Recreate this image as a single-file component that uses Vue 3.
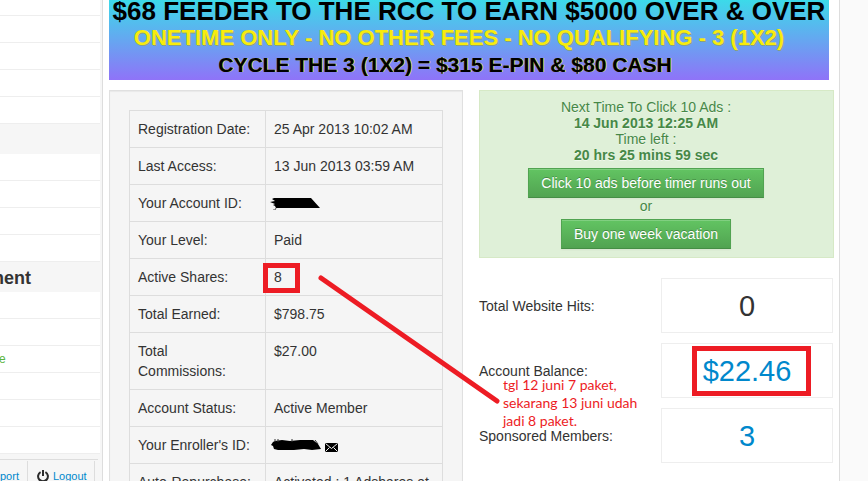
<script setup>
const menuTop = ['', '', '', '']
const menuMiddle = ['', '', '', '']
const menuBottom = ['', '', 'e', '', '', '']

const details = [
  { label: 'Registration Date:', value: '25 Apr 2013 10:02 AM' },
  { label: 'Last Access:', value: '13 Jun 2013 03:59 AM' },
  { label: 'Your Account ID:', kind: 'account' },
  { label: 'Your Level:', value: 'Paid' },
  { label: 'Active Shares:', value: '8' },
  { label: 'Total Earned:', value: '$798.75' },
  { label: 'Total Commissions:', value: '$27.00' },
  { label: 'Account Status:', value: 'Active Member' },
  { label: "Your Enroller's ID:", kind: 'enroller' },
  { label: 'Auto-Repurchase:', value: 'Activated : 1 Adshares at' }
]

const stats = [
  { label: 'Total Website Hits:', value: '0', link: false },
  { label: 'Account Balance:', value: '$22.46', link: true },
  { label: 'Sponsored Members:', value: '3', link: true }
]
</script>

<template>
  <div class="page">
    <aside class="sidebar">
      <ul class="menu">
        <li class="item item-cut"></li>
        <li v-for="(m, i) in menuTop" :key="i" class="item">{{ m }}</li>
      </ul>
      <div class="heading"></div>
      <ul class="menu">
        <li v-for="(m, i) in menuMiddle" :key="i" class="item">{{ m }}</li>
      </ul>
      <h2 class="heading">ment</h2>
      <ul class="menu">
        <li v-for="(m, i) in menuBottom" :key="i" class="item">
          <a v-if="m" class="green" href="#">{{ m }}</a>
        </li>
      </ul>
      <nav class="foot">
        <a class="foot-link support" href="#">port</a>
        <a class="foot-link logout" href="#">
          <svg class="power" width="12" height="12" viewBox="0 0 12 12" aria-hidden="true">
            <path d="M3.6 2.1A4.9 4.9 0 1 0 8.4 2.1" fill="none" stroke="#2b2b2b" stroke-width="2" />
            <path d="M6 0V6" stroke="#2b2b2b" stroke-width="2" />
          </svg>
          <span>Logout</span>
        </a>
      </nav>
    </aside>

    <main class="main">
      <div class="banner">
        <div class="b1">$68 FEEDER TO THE RCC TO EARN $5000 OVER &amp; OVER</div>
        <div class="b2">ONETIME ONLY - NO OTHER FEES - NO QUALIFYING - 3 (1X2)</div>
        <div class="b3">CYCLE THE 3 (1X2) = $315 E-PIN &amp; $80 CASH</div>
      </div>

      <div class="columns">
        <section class="well">
          <table class="details">
            <tbody>
              <tr v-for="d in details" :key="d.label">
                <th scope="row">{{ d.label }}</th>
                <td>
                  <svg v-if="d.kind === 'account'" class="scribble" width="52" height="14" viewBox="0 0 52 14" aria-hidden="true">
                    <path d="M4 2L41 2L50 12L6 12L5 10L3 9L5 8L0 6L5 5L2 3Z" fill="#000" />
                    <path d="M6 12L5 14L3 14" fill="none" stroke="#555" />
                  </svg>
                  <span v-else-if="d.kind === 'enroller'" class="enroller">
                    <svg class="scribble" width="52" height="14" viewBox="0 0 52 14" aria-hidden="true">
                      <path d="M5 3L12 2L20 3L30 2H43L48 6L51 11L42 12L34 11L24 12L8 12L4 11L3 8L1 7L3 4Z" fill="#000" />
                      <path d="M5 1V4M8 1V4M22 1V4M45 2L48 6" stroke="#333" stroke-width="1" />
                    </svg>
                    <svg class="mail" width="13" height="9" viewBox="0 0 13 9" aria-hidden="true">
                      <rect width="13" height="9" fill="#000" />
                      <path d="M0.5 0.5L6.5 5.5L12.5 0.5M0.5 8.5L4.5 4.5M12.5 8.5L8.5 4.5" fill="none" stroke="#f4f4f4" />
                    </svg>
                  </span>
                  <template v-else>{{ d.value }}</template>
                </td>
              </tr>
            </tbody>
          </table>
        </section>

        <section class="side">
          <div class="alert">
            <div>Next Time To Click 10 Ads :</div>
            <strong>14 Jun 2013 12:25 AM</strong>
            <div>Time left :</div>
            <strong>20 hrs 25 mins 59 sec</strong>
            <button class="btn" type="button">Click 10 ads before timer runs out</button>
            <div>or</div>
            <button class="btn" type="button">Buy one week vacation</button>
          </div>
          <dl class="stats">
            <div v-for="s in stats" :key="s.label" class="stat">
              <dt>{{ s.label }}</dt>
              <dd>
                <a v-if="s.link" href="#">{{ s.value }}</a>
                <span v-else>{{ s.value }}</span>
              </dd>
            </div>
          </dl>
        </section>
      </div>
    </main>
    <div class="gutter"></div>

    <div class="mark mark-shares"></div>
    <div class="mark mark-balance"></div>
    <svg class="pointer" width="182" height="130" viewBox="0 0 182 130" aria-hidden="true">
      <path d="M3 3L179 126" stroke="#ed1c24" stroke-width="5" stroke-linecap="round" />
    </svg>
    <p class="note">tgl 12 juni 7 paket,<br>sekarang 13 juni udah<br>jadi 8 paket.</p>
  </div>
</template>

<style>
body {
  margin: 0;
  background: #fafafa;
}
</style>

<style scoped>
.page {
  position: relative;
  display: flex;
  height: 100vh;
  overflow: hidden;
  font: 14px/20px "Liberation Sans", Arial, sans-serif;
  color: #333;
}
a {
  color: #0088cc;
  text-decoration: none;
}
.sidebar {
  flex: 0 0 102px;
  background: #f6f6f6;
  overflow: hidden;
}
.menu {
  list-style: none;
  margin: 0 2px 0 0;
  padding: 0;
  background: #fff;
}
.item {
  box-sizing: border-box;
  height: 27px;
  border-bottom: 1px solid #eee;
  font-size: 12px;
  line-height: 26px;
}
.item-cut {
  height: 16px;
}
.item .green {
  margin-left: -1px;
  color: #5bb542;
}
.heading {
  height: 30px;
  margin: 0 0 0 -12px;
  font-size: 18px;
  line-height: 32px;
}
.foot {
  display: flex;
  margin: 5px 4px 0 0;
  padding-top: 1px;
  border-top: 1px solid #ddd;
  font-size: 11px;
  line-height: 30px;
}
.foot-link {
  display: flex;
  align-items: center;
  box-sizing: border-box;
  border-right: 1px solid #ddd;
}
.support {
  width: 28px;
}
.logout {
  gap: 4px;
  width: 67px;
  padding-left: 9px;
}
.main {
  flex: 1;
  min-width: 0;
  padding: 0 5px 0 6px;
  background: #fff;
  border: solid #ddd;
  border-width: 0 1px;
}
.gutter {
  flex: 0 0 28px;
  background: #fafafa;
}
.banner {
  height: 80px;
  margin-right: 5px;
  overflow: hidden;
  background: linear-gradient(#3cdae9, #8f73f8);
  color: #000;
  font-weight: bold;
  text-align: center;
  white-space: nowrap;
}
.b1 {
  font-size: 26px;
  line-height: 22px;
}
.b2 {
  padding-right: 20px;
  color: #f8ec0c;
  font-size: 22px;
  line-height: 32px;
  text-shadow: 1px 1px 0 #8aa080;
}
.b3 {
  padding-right: 48px;
  font-size: 21px;
  line-height: 22px;
  text-shadow: 1px 0 0 #d6cc30;
}
.columns {
  display: grid;
  grid-template-columns: 354fr 355fr;
  gap: 16px;
  margin-top: 10px;
}
.well {
  padding: 19px;
  background: #f5f5f5;
  border: 1px solid #e0e0e0;
  box-shadow: inset 0 1px 1px rgba(0, 0, 0, 0.05);
}
.details {
  width: 100%;
  table-layout: fixed;
  border-collapse: collapse;
}
.details th,
.details td {
  padding: 8px;
  border: 1px solid #ddd;
  font-weight: normal;
  text-align: left;
  vertical-align: top;
}
.details th {
  width: 119px;
}
.scribble {
  display: block;
  margin: 3px 0 3px -4px;
}
.enroller {
  display: flex;
  align-items: center;
  gap: 3px;
}
.mail {
  margin-top: 4px;
}
.alert {
  display: flex;
  flex-direction: column;
  align-items: center;
  padding: 8px 35px 8px 14px;
  background: #dff0d8;
  border: 1px solid #d6e9c6;
  color: #468847;
  line-height: 16px;
  text-shadow: 0 1px 0 rgba(255, 255, 255, 0.5);
}
.btn {
  height: 30px;
  margin-top: 5px;
  padding: 0 12px;
  border: 1px solid #51a351;
  border-bottom-color: #458d45;
  background: linear-gradient(#62c462, #51a351);
  box-shadow: inset 0 1px 0 rgba(255, 255, 255, 0.2), 0 1px 2px rgba(0, 0, 0, 0.05);
  color: #fff;
  font: inherit;
  text-shadow: 0 -1px 0 rgba(0, 0, 0, 0.25);
  white-space: nowrap;
}
.stats {
  display: grid;
  gap: 10px;
  margin: 20px 1px 0 0;
}
.stat {
  display: grid;
  grid-template-columns: 18fr 17fr;
  align-items: center;
}
.stat dd {
  margin: 0;
  padding: 12px 0 11px;
  border: 1px solid #eee;
  font-size: 29px;
  line-height: 30px;
  text-align: center;
}
.mark {
  position: absolute;
  box-sizing: border-box;
  border: 5px solid #ed1c24;
}
.mark-shares {
  left: 263px;
  top: 263px;
  width: 37px;
  height: 30px;
}
.mark-balance {
  left: 692px;
  top: 346px;
  width: 119px;
  height: 50px;
}
.pointer {
  position: absolute;
  left: 318px;
  top: 275px;
}
.note {
  position: absolute;
  left: 503px;
  top: 376px;
  margin: 0;
  color: #ed1c24;
  font: 14px/18px Lato, "Open Sans", sans-serif;
  white-space: nowrap;
}
</style>
